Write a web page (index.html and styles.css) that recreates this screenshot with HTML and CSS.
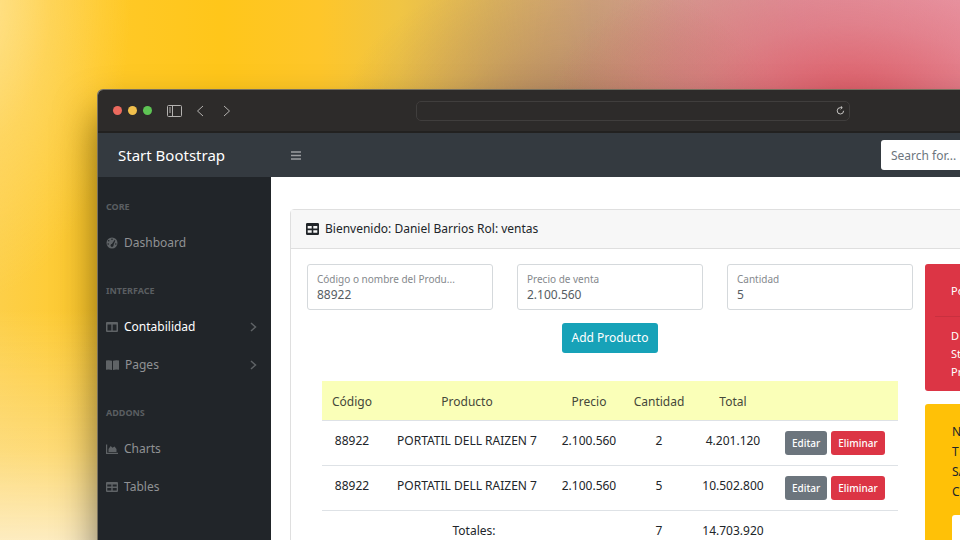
FILE: index.html
```html
<!DOCTYPE html>
<html lang="es">
<head>
<meta charset="utf-8">
<title>Start Bootstrap</title>
<link rel="stylesheet" href="styles.css">
</head>
<body>
<div class="window">
  <header class="titlebar">
    <div class="lights"><span class="light red"></span><span class="light amber"></span><span class="light green"></span></div>
    <div class="browser-nav">
      <button type="button" aria-label="Panel lateral"><svg width="15" height="12" viewBox="0 0 15 12"><rect x=".5" y=".5" width="14" height="11" rx="1"/><path d="M5.500 .5v11M2 3h2M2 5h2M2 7h2"/></svg></button>
      <button type="button" aria-label="Atrás"><svg width="8" height="12" viewBox="0 0 8 12"><path d="M7 1 1.500 6 7 11"/></svg></button>
      <button type="button" aria-label="Adelante"><svg width="8" height="12" viewBox="0 0 8 12"><path d="M1 1 6.500 6 1 11"/></svg></button>
    </div>
    <div class="address">
      <button type="button" aria-label="Recargar"><svg width="9" height="9" viewBox="0 0 9 9"><path d="M7.600 4.800A3.200 3.200 0 1 1 4.400 1.600H6M4.600 0 6.300 1.600 4.600 3.200"/></svg></button>
    </div>
  </header>
  <nav class="topnav">
    <a class="brand" href="#">Start Bootstrap</a>
    <button class="toggle" type="button" aria-label="Menú"><svg width="10" height="9" viewBox="0 0 10 9"><path d="M0 1h10M0 4.500h10M0 8h10"/></svg></button>
    <input class="search" type="text" placeholder="Search for..." aria-label="Search for...">
  </nav>
  <div class="layout">
    <nav class="sidebar">
      <h2>Core</h2>
      <a href="#"><svg width="12" height="12" viewBox="0 0 12 12"><circle cx="6" cy="6" r="5.500"/><g class="cut"><circle cx="6" cy="2.300" r=".8"/><circle cx="2.700" cy="3.800" r=".8"/><circle cx="2.200" cy="7" r=".8"/><circle cx="9.800" cy="7" r=".8"/><path d="M5 8.500 8.500 3l.8.600L7 9z"/><circle cx="6" cy="8.500" r="1.400"/></g></svg>Dashboard</a>
      <h2>Interface</h2>
      <a class="active" href="#"><svg width="12" height="12" viewBox="0 0 12 12"><path fill-rule="evenodd" d="M1 1h10a1 1 0 0 1 1 1v8a1 1 0 0 1-1 1H1a1 1 0 0 1-1-1V2a1 1 0 0 1 1-1zm.5 2.500v6h3.800v-6zm5.200 0v6h3.800v-6z"/></svg>Contabilidad<svg class="chevron" width="7" height="10" viewBox="0 0 7 10"><path d="M1 1l4.500 4L1 9"/></svg></a>
      <a href="#"><svg width="13" height="12" viewBox="0 0 13 12"><path d="M0 1.500Q3 .8 6 1.700V11Q3 10 0 10.800zM7 1.700Q10 .8 13 1.500v9.300Q10 10 7 11z"/></svg>Pages<svg class="chevron" width="7" height="10" viewBox="0 0 7 10"><path d="M1 1l4.500 4L1 9"/></svg></a>
      <h2>Addons</h2>
      <a href="#"><svg width="12" height="12" viewBox="0 0 12 12"><path d="M0 1.500h1.200v8.300H12V11H0zM2.500 9V6l2.200-3 1.800 1.800L8.500 3.500 10.500 6v3z"/></svg>Charts</a>
      <a href="#"><svg width="12" height="12" viewBox="0 0 12 12"><path fill-rule="evenodd" d="M1 1h10a1 1 0 0 1 1 1v8a1 1 0 0 1-1 1H1a1 1 0 0 1-1-1V2a1 1 0 0 1 1-1zm.3 2.500v2h4v-2zm5.400 0v2h4v-2zM1.300 7v2.500h4V7zm5.400 0v2.500h4V7z"/></svg>Tables</a>
    </nav>
    <main class="content">
      <section class="card">
        <h1 class="card-header"><svg width="13" height="12" viewBox="0 0 13 12"><path fill-rule="evenodd" d="M1.300 0h10.400A1.300 1.300 0 0 1 13 1.300v9.400a1.300 1.300 0 0 1-1.300 1.300H1.300A1.300 1.300 0 0 1 0 10.700V1.300A1.300 1.300 0 0 1 1.300 0zm.4 3v2.500h4V3zm5.600 0v2.500h4V3zM1.700 7.200v2.500h4V7.200zm5.600 0v2.500h4V7.200z"/></svg>Bienvenido: Daniel Barrios Rol: ventas</h1>
        <div class="card-body">
          <div class="sale">
            <form>
              <div class="fields">
                <div class="field"><label for="codigo">Código o nombre del Produ...</label><input id="codigo" type="text" value="88922"></div>
                <div class="field"><label for="precio">Precio de venta</label><input id="precio" type="text" value="2.100.560"></div>
                <div class="field"><label for="cantidad">Cantidad</label><input id="cantidad" type="text" value="5"></div>
              </div>
              <button class="btn add" type="button">Add Producto</button>
            </form>
            <table>
              <colgroup><col class="c-code"><col class="c-product"><col class="c-price"><col class="c-count"><col class="c-total"><col></colgroup>
              <thead><tr><th>Código</th><th>Producto</th><th>Precio</th><th>Cantidad</th><th>Total</th><th></th></tr></thead>
              <tbody>
                <tr><td>88922</td><td>PORTATIL DELL RAIZEN 7</td><td>2.100.560</td><td>2</td><td>4.201.120</td><td class="actions"><button class="btn edit" type="button">Editar</button><button class="btn delete" type="button">Eliminar</button></td></tr>
                <tr><td>88922</td><td>PORTATIL DELL RAIZEN 7</td><td>2.100.560</td><td>5</td><td>10.502.800</td><td class="actions"><button class="btn edit" type="button">Editar</button><button class="btn delete" type="button">Eliminar</button></td></tr>
                <tr><td colspan="3">Totales:</td><td>7</td><td>14.703.920</td><td></td></tr>
              </tbody>
            </table>
          </div>
          <aside class="panels">
            <section class="panel danger">
              <h2>Po</h2>
              <p>D</p><p>St</p><p>Pr</p>
            </section>
            <section class="panel warning">
              <p>N</p><p>T</p><p>SA</p><p>C</p>
              <input type="text" aria-label="Valor">
            </section>
          </aside>
        </div>
      </section>
    </main>
  </div>
</div>
</body>
</html>
```
FILE: styles.css
```css
* { box-sizing: border-box; }
html { height: 100%; overflow: hidden; }
body {
  margin: 0;
  min-height: 100%;
  padding: 89px 0 0 97px;
  font: 12px/18px "Noto Sans", "Open Sans", sans-serif;
  color: #212529;
  background:
    radial-gradient(ellipse 300px 150px at 850px 100px, rgba(220, 88, 98, .95) 0%, rgba(220, 92, 102, .4) 50%, rgba(220, 92, 102, 0) 100%),
    radial-gradient(ellipse 220px 150px at 560px 120px, rgba(165, 120, 90, .75) 0%, rgba(165, 120, 90, .3) 50%, rgba(165, 120, 90, 0) 100%),
    linear-gradient(0deg, #fdecc0 0, rgba(253, 228, 160, .6) 90px, rgba(253, 215, 110, 0) 230px),
    radial-gradient(ellipse 160px 300px at -30px 0, #ffe493 0%, rgba(255, 220, 120, .5) 50%, rgba(255, 215, 100, 0) 100%),
    linear-gradient(90deg, #fdcf48 0, #ffc928 100px, #ffc61a 220px, #fec62a 320px, #f0c544 400px, #dcb45c 490px, #cfa37c 590px, #d49a90 680px, #e096a0 800px, #ea9dab 960px);
}
button, input { font: inherit; }
button { border: 0; background: none; padding: 0; color: inherit; }
a { color: inherit; text-decoration: none; }
h1, h2, p { margin: 0; font: inherit; }
svg { flex: none; display: block; fill: currentColor; }

.window {
  margin-right: -305px;
  min-height: calc(100vh - 89px);
  display: flex;
  flex-direction: column;
  border: 1px solid #77705f;
  border-bottom: 0;
  border-radius: 6px 6px 0 0;
  overflow: hidden;
  background: #fff;
  box-shadow: 0 24px 40px rgba(0, 0, 0, .5);
}
.titlebar {
  display: flex;
  align-items: center;
  height: 43px;
  padding-left: 15px;
  background: #2d2b2a;
  border-bottom: 2px solid #222120;
}
.lights { display: flex; gap: 6px; }
.light { width: 9px; height: 9px; border-radius: 50%; }
.red { background: #ec6a5e; }
.amber { background: #f0bf4c; }
.green { background: #5ec454; }
.browser-nav { display: flex; align-items: center; gap: 19px; margin-left: 15px; color: #b4b2b0; }
.browser-nav button:first-child { margin-right: -5px; }
.titlebar svg { fill: none; stroke: currentColor; }
.address {
  display: flex;
  align-items: center;
  justify-content: flex-end;
  width: 434px;
  height: 20px;
  margin-left: 185px;
  padding-right: 4px;
  border: 1px solid #403e3d;
  border-radius: 5px;
  color: #c8c6c4;
}
.topnav { display: flex; align-items: center; height: 44px; background: #343a40; }
.brand { width: 173px; padding-left: 20px; font-size: 15px; line-height: 24px; color: #fff; }
.toggle { margin-left: 20px; color: #9b9da0; }
.toggle svg { fill: none; stroke: currentColor; stroke-width: 1.500; }
.search {
  width: 330px;
  height: 30px;
  margin-left: auto;
  margin-right: 53px;
  padding: 0 10px;
  border: 0;
  border-radius: 3px;
  background: #fff;
}
.search::placeholder { color: #6c757d; opacity: 1; }

.layout { display: flex; flex: 1; }
.sidebar { width: 173px; flex: none; padding: 1px 0 0 8px; background: #212529; color: #909294; }
.sidebar h2 { padding: 20px 0 8px; font-size: 9px; font-weight: 700; text-transform: uppercase; color: #5a5e61; }
.sidebar a { display: flex; align-items: center; gap: 6px; height: 38px; padding-right: 14px; }
.sidebar svg { color: #5f6366; }
.sidebar .cut { fill: #212529; }
.sidebar .active { color: #fff; }
.sidebar .chevron { margin-left: auto; fill: none; stroke: currentColor; stroke-width: 1.500; }

.content { flex: 1; min-width: 0; padding: 32px 19px; }
.card { border: 1px solid #dfdfdf; border-radius: 4px; height: 100%; }
.card-header {
  display: flex;
  align-items: center;
  gap: 6px;
  height: 39px;
  padding: 0 15px;
  background: #f7f7f7;
  border-bottom: 1px solid #dfdfdf;
}
.card-body { display: grid; grid-template-columns: 2fr 1fr; gap: 12px; padding: 15px 16px; }
.fields { display: grid; grid-template-columns: repeat(3, 1fr); gap: 24px; }
.field { height: 46px; padding: 6px 9px; border: 1px solid #d5d9dc; border-radius: 3px; color: #565d63; }
.field label {
  display: block;
  overflow: hidden;
  text-overflow: ellipsis;
  white-space: nowrap;
  font-size: 10px;
  line-height: 16px;
  color: #85898d;
}
.field input { display: block; width: 100%; height: 16px; padding: 0; border: 0; color: inherit; background: none; }
.btn { border-radius: 3px; color: #fff; }
.add { display: block; height: 30px; margin: 13px auto 0; padding: 0 10px; background: #17a2b8; }
table { width: calc(100% - 30px); margin: 28px 15px 0; border-collapse: collapse; table-layout: fixed; text-align: center; }
.c-code { width: 60px; }
.c-product { width: 170px; }
.c-price { width: 74px; }
.c-count { width: 66px; }
.c-total { width: 82px; }
th { height: 39px; padding: 3px 0 0; font-weight: 400; background: #faffb8; color: #45483a; border-bottom: 1px solid #dee2e6; }
td { height: 45px; padding: 11px 0 10px; vertical-align: top; white-space: nowrap; border-bottom: 1px solid #dee2e6; }
td.actions { text-align: left; padding: 10px 0 0 11px; }
.actions .btn { height: 24px; padding: 0 7px; font-size: 10px; font-weight: 500; }
.actions .edit { background: #6c757d; margin-right: 4px; }
.actions .delete { background: #dc3545; }

.panels { display: flex; flex-direction: column; gap: 13px; }
.panel { border-radius: 3px; }
.danger { height: 127px; padding: 0 10px; background: #dc3545; color: #fff; font-size: 11px; }
.danger h2 { height: 53px; padding: 18px 16px 0; border-bottom: 1px solid #c9303f; margin-bottom: 10px; }
.danger p { padding-left: 16px; }
.warning { padding: 18px 27px; background: #ffc107; }
.warning p { line-height: 20px; }
.warning input { width: 100%; height: 30px; margin-top: 13px; border: 0; border-radius: 3px; background: #fff; }
```
